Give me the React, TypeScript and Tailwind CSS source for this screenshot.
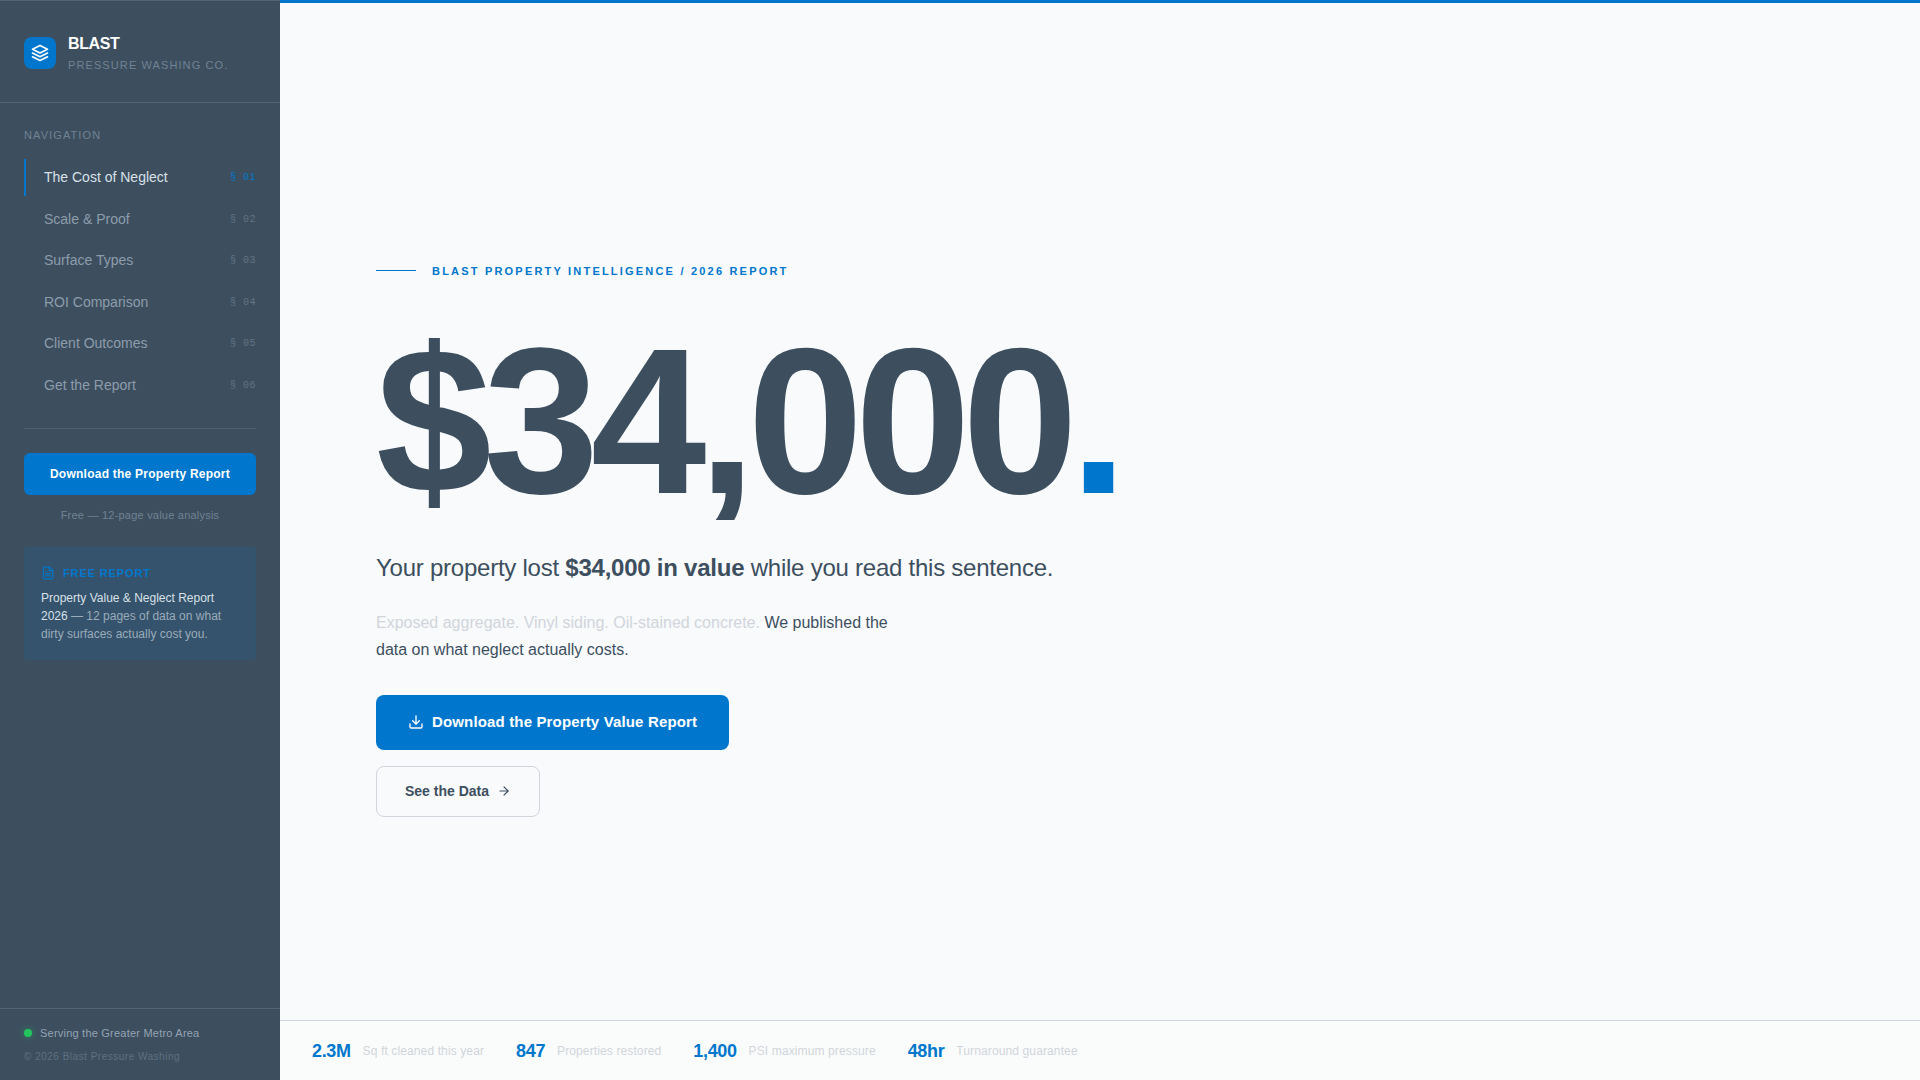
import { ArrowRight, Download, FileText } from "lucide-react";

const navItems = [
  { label: "The Cost of Neglect", index: "§ 01", href: "#cost", active: true },
  { label: "Scale & Proof", index: "§ 02", href: "#proof" },
  { label: "Surface Types", index: "§ 03", href: "#surfaces" },
  { label: "ROI Comparison", index: "§ 04", href: "#roi" },
  { label: "Client Outcomes", index: "§ 05", href: "#outcomes" },
  { label: "Get the Report", index: "§ 06", href: "#report" },
];

const stats = [
  { value: "2.3M", label: "Sq ft cleaned this year" },
  { value: "847", label: "Properties restored" },
  { value: "1,400", label: "PSI maximum pressure" },
  { value: "48hr", label: "Turnaround guarantee" },
];

function LayersIcon() {
  return (
    <svg width="18" height="18" viewBox="0 0 24 24" fill="none" stroke="currentColor" strokeWidth="2.2" strokeLinecap="round" strokeLinejoin="round" aria-hidden>
      <path d="M12 2 2 7l10 5 10-5-10-5z" />
      <path d="m2 12 10 5 10-5" />
      <path d="m2 17 10 5 10-5" />
    </svg>
  );
}

function Sidebar() {
  return (
    <aside className="flex w-[280px] shrink-0 flex-col border-t border-white/12 bg-[#3d4f5f]">
      <div className="flex items-center gap-3 border-b border-white/12 px-6 pt-8 pb-[29px]">
        <div className="flex size-8 items-center justify-center rounded-lg bg-[#0077cc] text-white">
          <LayersIcon />
        </div>
        <div>
          <div className="text-base leading-[22px] font-bold tracking-tight text-white">BLAST</div>
          <div className="mt-[2px] text-[11px] leading-4 tracking-widest text-[#718292] uppercase">
            Pressure Washing Co.
          </div>
        </div>
      </div>

      <nav className="px-6 pt-6" aria-label="Sections">
        <p className="mb-4 text-[11px] leading-4 tracking-widest text-[#718292]">NAVIGATION</p>
        <ul className="flex min-h-[245px] flex-col justify-between">
          {navItems.map((item) => (
            <li key={item.href}>
              <a
                href={item.href}
                className={
                  item.active
                    ? "flex items-center justify-between border-l-2 border-[#0077cc] py-2 pl-[18px] text-[14px] leading-[21px] text-[#d8e0e8]"
                    : "flex items-center justify-between border-l-2 border-transparent py-2 pl-[18px] text-[14px] leading-[21px] text-[#8c9cab]"
                }
              >
                {item.label}
                <span
                  className={
                    item.active
                      ? "font-['Liberation_Mono',monospace] text-[10px] tracking-wider text-[#0077cc]"
                      : "font-['Liberation_Mono',monospace] text-[10px] tracking-wider text-[#617384]"
                  }
                >
                  {item.index}
                </span>
              </a>
            </li>
          ))}
        </ul>
      </nav>

      <div className="mx-6 mt-6 border-t border-white/10 pt-6">
        <button className="h-[42px] w-full rounded-md bg-[#0077cc] text-xs font-bold tracking-[0.02em] text-white">
          Download the Property Report
        </button>
        <p className="mt-3 text-center text-[11px] leading-4 tracking-[0.02em] text-[#718292]">
          Free — 12-page value analysis
        </p>
      </div>

      <div className="mx-6 mt-6 rounded-sm border border-[#0077cc]/5 bg-[#0077cc]/12 px-4 pt-[17px] pb-4">
        <div className="flex items-center gap-2 text-[#0077cc]">
          <FileText size={14} aria-hidden />
          <span className="text-[11px] leading-4 font-bold tracking-[0.08em]">FREE REPORT</span>
        </div>
        <p className="mt-2 text-xs leading-[18px] text-[#9aabba]">
          <span className="text-[#d8e0e8]">Property Value &amp; Neglect Report 2026</span> — 12 pages
          of data on what dirty surfaces actually cost you.
        </p>
      </div>

      <div className="mt-auto border-t border-white/12 px-6 pt-4 pb-[15px]">
        <div className="flex items-center gap-2 text-[11px] leading-4 tracking-[0.02em] text-[#94a3b3]">
          <span className="size-2 rounded-full bg-[#22c55e] shadow-[0_0_6px_#22c55e80]" />
          Serving the Greater Metro Area
        </div>
        <p className="mt-2 text-[10px] leading-4 tracking-wider text-[#5d6f80]">
          © 2026 Blast Pressure Washing
        </p>
      </div>
    </aside>
  );
}

function Hero() {
  return (
    <section className="flex flex-1 flex-col items-start justify-center px-24 pt-14">
      <div className="flex items-center gap-4">
        <span className="h-px w-10 bg-[#0077cc]" />
        <span className="text-[11px] leading-4 font-bold tracking-[0.2em] text-[#0077cc]">
          BLAST PROPERTY INTELLIGENCE / 2026 REPORT
        </span>
      </div>

      {/* The comma's tail is cut off at the bottom of the headline box */}
      <h1 className="mt-[50px] overflow-hidden pb-[7px] text-[208px] leading-[184px] font-bold tracking-[-0.04em] text-[#3d4f5f]">
        $34,000<span className="text-[#0077cc]">.</span>
      </h1>

      <p className="mt-8 text-2xl leading-8 tracking-[-0.01em] text-[#3d4f5f]">
        Your property lost <strong>$34,000 in value</strong> while you read this sentence.
      </p>
      <p className="mt-[25px] max-w-[520px] text-base leading-[27px] text-[#3d4f5f]">
        <span className="text-[#d1d5db]">Exposed aggregate. Vinyl siding. Oil-stained concrete.</span>{" "}
        We published the data on what neglect actually costs.
      </p>

      <button className="mt-8 flex h-[55px] items-center gap-2 rounded-lg bg-[#0077cc] px-8 text-[15px] font-bold tracking-[0.01em] text-white">
        <Download size={16} aria-hidden />
        Download the Property Value Report
      </button>
      <button className="mt-4 flex h-[51px] items-center gap-2 rounded-lg border border-[#d1d5db] px-7 text-sm font-bold text-[#3d4f5f]">
        See the Data
        <ArrowRight size={14} aria-hidden />
      </button>
    </section>
  );
}

export default function App() {
  return (
    <div className="flex min-h-screen bg-[#f8fafc] font-['Liberation_Sans',Arial,sans-serif]">
      <Sidebar />
      <main className="flex min-w-0 flex-1 flex-col border-t-3 border-[#0077cc]">
        <Hero />
        <dl className="flex h-[60px] items-center gap-8 border-t border-[#cfd6dd] bg-[#fafcfb] px-8">
          {stats.map((stat) => (
            <div key={stat.label} className="flex flex-row-reverse items-center gap-3">
              <dt className="text-xs tracking-[0.01em] text-[#d1d5db]">{stat.label}</dt>
              <dd className="text-lg font-bold tracking-[-0.02em] text-[#0077cc]">{stat.value}</dd>
            </div>
          ))}
        </dl>
      </main>
    </div>
  );
}
